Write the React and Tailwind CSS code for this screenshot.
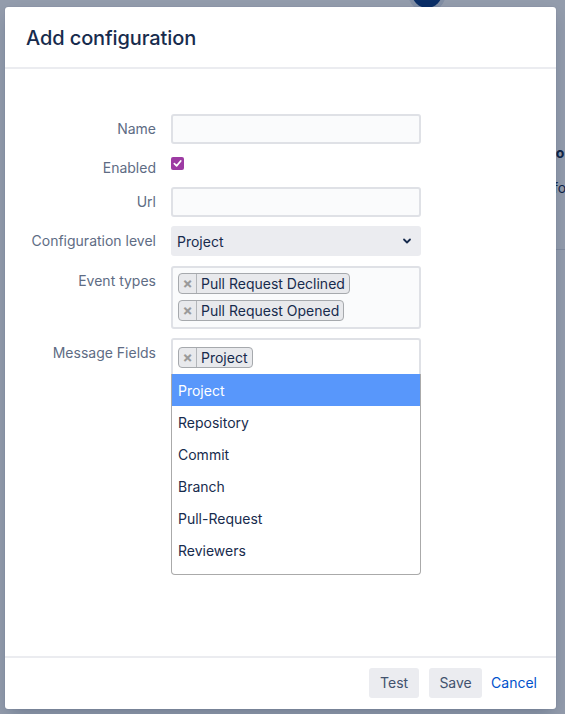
import React from "react";

const font = { fontFamily: "Inter, 'Noto Sans', 'Liberation Sans', sans-serif" };

function Tag({ children }) {
  return (
    <span className="inline-flex items-stretch h-[21px] border border-[#a6a9ad] bg-[#e8e9ec] rounded-[4px] text-[14px] leading-[19px] text-[#172b4d]">
      <span className="w-[18px] flex items-center justify-center border-r border-[#b3b6ba] text-[#9a9a9a] text-[15px] font-bold">×</span>
      <span className="pl-[4px] pr-[4px]">{children}</span>
    </span>
  );
}

function Label({ children, pt = "pt-[5px]" }) {
  return (
    <div className={`w-[151px] shrink-0 text-right text-[14px] leading-[20px] text-[#5e6c84] ${pt}`}>{children}</div>
  );
}

export default function App() {
  const items = ["Project", "Repository", "Commit", "Branch", "Pull-Request", "Reviewers"];
  return (
    <div className="relative w-[565px] h-[714px] overflow-hidden bg-white" style={font}>
      {/* page behind */}
      <div className="pt-[143px] text-[14px] text-[#172b4d] whitespace-nowrap">
        <div className="ml-[545px] font-bold leading-[20px]">No</div>
        <div className="ml-[541px] mt-[15px] leading-[20px]">Info</div>
        <div className="ml-[556px] mt-[51px] border-t border-[#dfe1e6]"></div>
      </div>
      <div className="absolute left-[412px] top-[-22px] w-[30px] h-[30px] rounded-full bg-[#0b3c82] ring-4 ring-[#dfe6f0]"></div>

      {/* blanket */}
      <div className="absolute inset-0 bg-[#091e42]/[0.44]"></div>

      {/* dialog */}
      <div className="absolute left-[5px] top-[7px] w-[551px] h-[702px] bg-white rounded-[3px] shadow-[0_0_1px_rgba(9,30,66,0.3),0_8px_16px_-4px_rgba(9,30,66,0.25)] flex flex-col">
        <div className="h-[62px] shrink-0 flex items-center pt-[1px] px-[21px] border-b-2 border-[#ebecf0]">
          <h1 className="text-[20px] font-medium text-[#172b4d] tracking-[-0.1px]">Add configuration</h1>
        </div>

        <div className="flex-1 pt-[45px]">
          {/* Name */}
          <div className="flex gap-[15px]">
            <Label>Name</Label>
            <div className="w-[250px] h-[30px] border-2 border-[#dfe1e6] bg-[#fafbfc] rounded-[3px]"></div>
          </div>
          {/* Enabled */}
          <div className="flex gap-[15px] mt-[13px]">
            <Label pt="pt-[1px]">Enabled</Label>
            <div className="w-[13px] h-[13px] rounded-[2px] bg-[#9d3ba3] flex items-center justify-center">
              <svg width="9" height="9" viewBox="0 0 10 10" fill="none">
                <path d="M1.5 5.2 L4 7.6 L8.6 2.2" stroke="white" strokeWidth="1.9" strokeLinecap="round" strokeLinejoin="round" />
              </svg>
            </div>
          </div>
          {/* Url */}
          <div className="flex gap-[15px] mt-[9px]">
            <Label>Url</Label>
            <div className="w-[250px] h-[30px] border-2 border-[#dfe1e6] bg-[#fafbfc] rounded-[3px]"></div>
          </div>
          {/* Config level */}
          <div className="flex gap-[15px] mt-[9px]">
            <Label>Configuration level</Label>
            <div className="w-[250px] h-[30px] bg-[#ebecf0] rounded-[3px] flex items-center justify-between pl-[6px] pr-[9px]">
              <span className="text-[14px] text-[#172b4d]">Project</span>
              <svg width="10" height="10" viewBox="0 0 10 10" fill="none">
                <path d="M2 3.5 L5 6.5 L8 3.5" stroke="#172b4d" strokeWidth="1.8" strokeLinecap="round" strokeLinejoin="round" />
              </svg>
            </div>
          </div>
          {/* Event types */}
          <div className="flex gap-[15px] mt-[10px]">
            <Label>Event types</Label>
            <div className="w-[250px] h-[63px] border-2 border-[#dfe1e6] bg-[#fafbfc] rounded-[3px] pl-[5px] pt-[5px] flex flex-col items-start gap-[6px]">
              <Tag>Pull Request Declined</Tag>
              <Tag>Pull Request Opened</Tag>
            </div>
          </div>
          {/* Message fields */}
          <div className="flex gap-[15px] mt-[9px]">
            <Label>Message Fields</Label>
            <div className="relative w-[250px]">
              <div className="h-[36px] border-2 border-b-0 border-[#dfe1e6] bg-white rounded-t-[3px] pl-[5px] pt-[5px]">
                <Tag>Project</Tag>
              </div>
              <div className="absolute left-0 top-full w-[250px] h-[201px] bg-white border border-t-0 border-[#aaaaaa] rounded-b-[4px] z-10">
                {items.map((it, i) => (
                  <div
                    key={it}
                    className={`h-[32px] flex items-center pl-[6px] text-[14px] ${i === 0 ? "bg-[#5897fb] text-white" : "text-[#172b4d]"}`}
                  >
                    {it}
                  </div>
                ))}
              </div>
            </div>
          </div>
        </div>

        <div className="h-[53px] shrink-0 border-t-2 border-[#ebecf0] flex items-center justify-end pr-[19px] pb-[2px]">
          <button className="h-[30px] w-[50px] bg-[#ebecf0] rounded-[3px] text-[14px] text-[#42526e]">Test</button>
          <button className="h-[30px] w-[53px] ml-[10px] bg-[#ebecf0] rounded-[3px] text-[14px] text-[#42526e]">Save</button>
          <button className="h-[30px] ml-[9px] text-[14px] text-[#0052cc]">Cancel</button>
        </div>
      </div>
    </div>
  );
}
